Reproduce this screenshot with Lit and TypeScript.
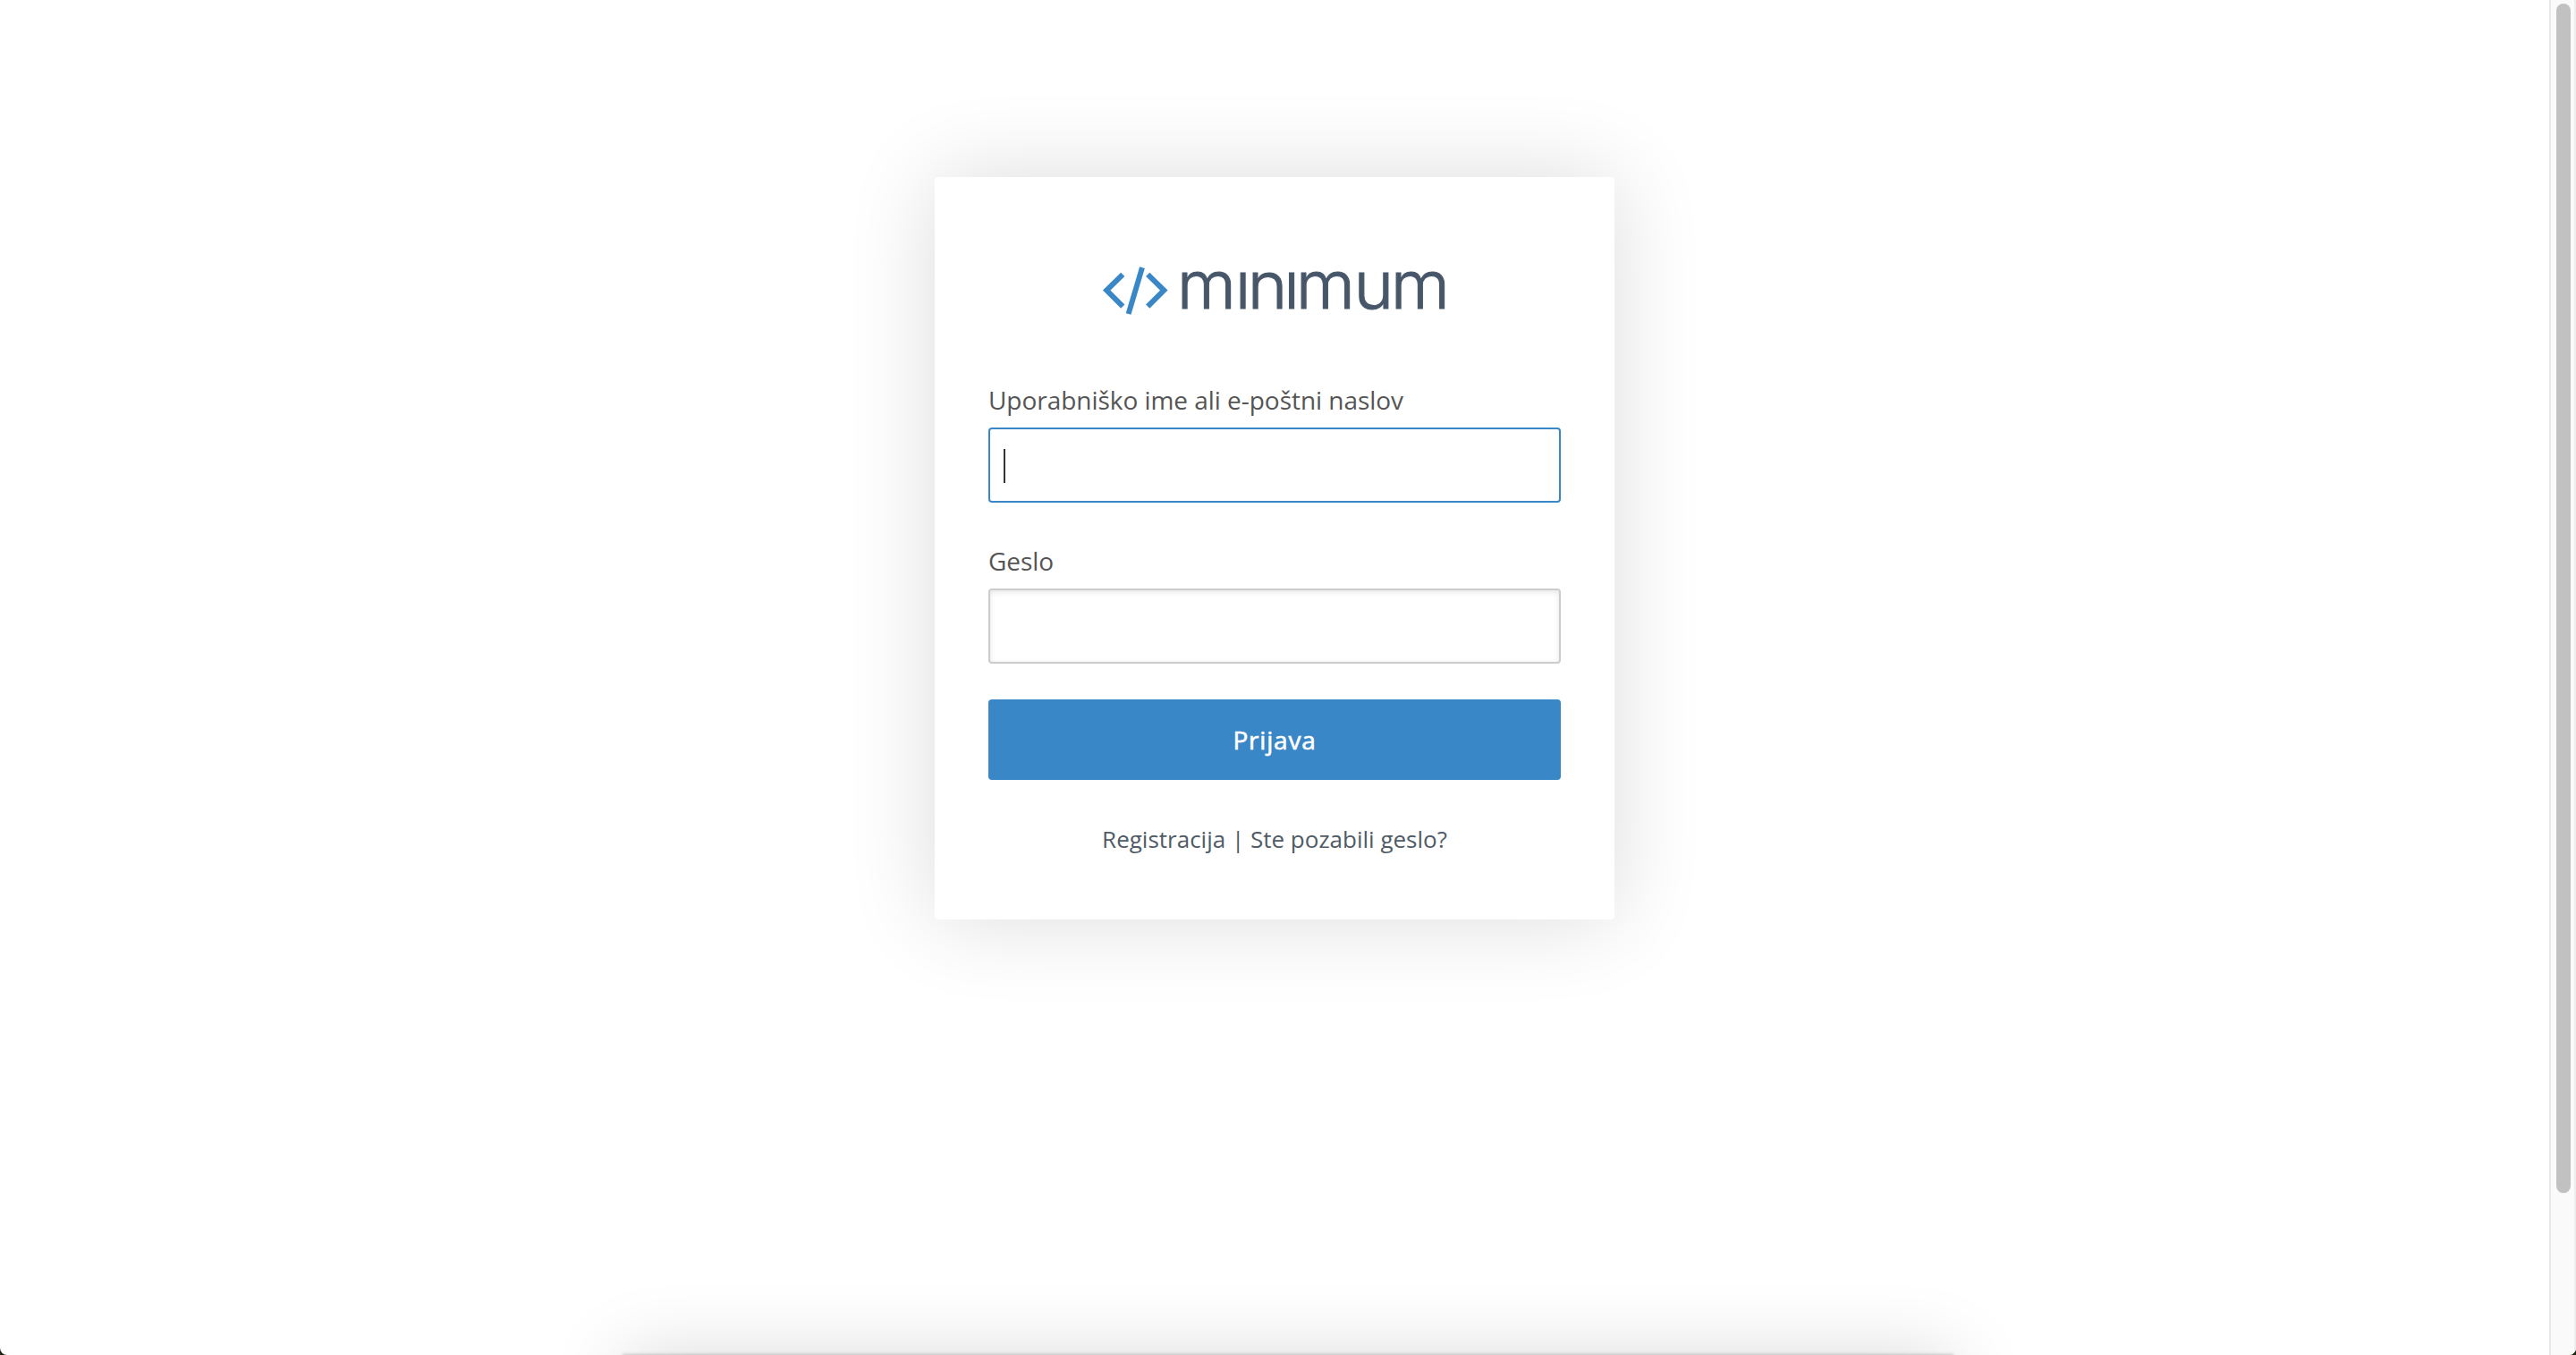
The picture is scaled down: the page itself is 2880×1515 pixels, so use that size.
import {LitElement, html, css} from 'lit';
import {customElement, property} from 'lit/decorators.js';

@customElement('minimum-logo')
export class MinimumLogo extends LitElement {
    static styles = css`
        :host {
            display: block;
            height: 60px;
        }
        .logo {
            display: block;
            margin: 0 auto;
            overflow: visible;
        }
        .mark {
            fill: none;
            stroke: #3a87c7;
            stroke-width: 6;
        }
        .word {
            fill: #475769;
            stroke: #475769;
            stroke-width: 1;
            font-family: Inter, "Liberation Sans", sans-serif;
            font-size: 73px;
            font-weight: 300;
        }
    `;
    render() {
        return html`
            <svg class="logo" width="420" height="60" viewBox="1215 295 420 60">
                <g class="mark">
                    <path d="M1255.3 306.8L1237.2 324.5L1255.3 342.7" />
                    <path d="M1283.2 306.8L1301.3 324.5L1283.2 342.7" />
                    <path d="M1277 299.2L1261.6 351" />
                </g>
                <text class="word" transform="translate(1315.8 344.5) scale(1.04 1)"
                    x="0 62.5 76 114.9 127.9 190.2 229.8">mınımum</text>
            </svg>
        `;
    }
}

@customElement('login-field')
export class LoginField extends LitElement {
    @property() label = '';
    @property({type: Boolean}) active = false;

    static styles = css`
        :host {
            display: block;
        }
        .label {
            display: block;
            height: 38px;
            line-height: 38px;
            margin-bottom: 12px;
            font-size: 28px;
            letter-spacing: -.04px;
            color: #555;
        }
        .input {
            display: flex;
            align-items: center;
            box-sizing: border-box;
            height: 84px;
            padding: 2px 15px 0;
            border: 2px solid #ccc;
            border-radius: 4px;
            background: #fff;
            box-shadow: inset 0 2px 6px rgba(0, 0, 0, .1);
        }
        .input.active {
            border-color: #3a87c7;
            box-shadow: none;
        }
        .caret {
            width: 2px;
            height: 38px;
            background: #333;
        }
    `;
    render() {
        return html`
            <span class="label">${this.label}</span>
            <div class="input ${this.active ? 'active' : ''}">
                ${this.active ? html`<span class="caret"></span>` : ''}
            </div>
        `;
    }
}

@customElement('app-root')
export class AppRoot extends LitElement {
    static styles = css`
        :host {
            display: block;
            position: relative;
            width: 2880px;
            height: 1515px;
            overflow: hidden;
            background: #1c2611;
            font-family: "Open Sans", "Noto Sans", sans-serif;
        }
        .window {
            display: flex;
            height: 100%;
            overflow: hidden;
            background: #fff;
            border-radius: 0 0 8px 8px;
        }
        .page {
            flex: 1;
            padding-top: 198px;
        }
        .card {
            box-sizing: border-box;
            width: 760px;
            height: 830px;
            margin: 0 auto;
            padding: 97px 60px 0;
            border-radius: 4px;
            background: #fff;
            box-shadow: 0 0 100px rgba(0, 0, 0, .14);
        }
        .username {
            margin-top: 73px;
        }
        .password {
            margin-top: 46px;
        }
        .submit {
            display: block;
            width: 100%;
            height: 90px;
            margin: 40px 0 0;
            padding: 0;
            border: 0;
            border-radius: 4px;
            background: #3a87c7;
            color: #fff;
            font-family: inherit;
            font-size: 28px;
            letter-spacing: .8px;
            -webkit-text-stroke: .6px #fff;
        }
        .links {
            margin: 48px 0 0;
            line-height: 36px;
            font-size: 26px;
            text-align: center;
            color: #555;
        }
        .link {
            color: #4f5b66;
            text-decoration: none;
        }
        .scrollbar {
            box-sizing: border-box;
            width: 30px;
            padding: 4px 4px 0 6px;
            border-left: 2px solid #e8e8e8;
            border-right: 2px solid #ededed;
            background: #fafafa;
        }
        .thumb {
            height: 1330px;
            border-radius: 8px;
            background: #c1c1c1;
        }
        /* sheet parked just under the fold, only its shadow shows */
        .sheet {
            position: absolute;
            top: 100%;
            left: 696px;
            width: 1488px;
            height: 200px;
            box-shadow: 0 0 84px rgba(0, 0, 0, .15), 0 0 4px rgba(0, 0, 0, .3);
        }
    `;
    render() {
        return html`
            <div class="window">
                <main class="page">
                    <form class="card">
                        <minimum-logo></minimum-logo>
                        <login-field class="username" label="Uporabniško ime ali e-poštni naslov" active></login-field>
                        <login-field class="password" label="Geslo"></login-field>
                        <button class="submit" type="button">Prijava</button>
                        <p class="links">
                            <a class="link" href="#">Registracija</a> | <a class="link" href="#">Ste pozabili geslo?</a>
                        </p>
                    </form>
                </main>
                <div class="scrollbar"><div class="thumb"></div></div>
            </div>
            <div class="sheet"></div>
        `;
    }
}
